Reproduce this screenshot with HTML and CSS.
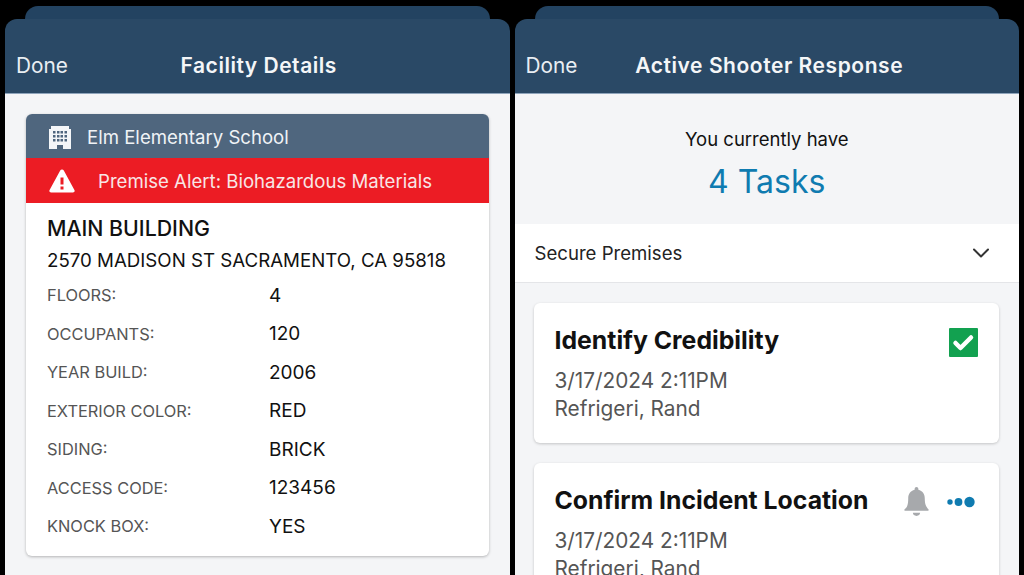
FILE: index.html
```html
<!doctype html>
<html lang="en">

<head>
  <meta charset="utf-8" />
  <meta name="viewport" content="width=device-width,initial-scale=1" />
  <title>Facility Details</title>
  <link rel="stylesheet" href="styles.css">
</head>

<body>
  <div class="screens">
    <div class="phone">
      <div class="sheet-back"></div>
      <div class="nav">
        <div class="done">Done</div>
        <div class="nav-title">Facility Details</div>
      </div>
      <div class="content facility">
        <div class="facility-card">
          <div class="school">
            <svg class="school-icon" viewBox="0 0 24 24" width="24" height="24">
              <path fill="#f4f6f8" fill-rule="evenodd" d="M3 1h18v3h2v20h-8v-4H9v4H1V4h2zM5 6v2.500h2.500V6zM9 6v2.500h2.500V6zM12.500 6v2.500H15V6zM16.500 6v2.500H19V6zM5 10v2.500h2.500V10zM9 10v2.500h2.500V10zM12.500 10v2.500H15V10zM16.500 10v2.500H19V10zM5 14v2.500h2.500V14zM9 14v2.500h2.500V14zM12.500 14v2.500H15V14zM16.500 14v2.500H19V14z" />
            </svg>
            <span>Elm Elementary School</span>
          </div>
          <div class="alert">
            <svg class="alert-icon" viewBox="0 0 26 24" width="26" height="24">
              <path fill="#fff" fill-rule="evenodd" d="M13 0.500c.8 0 1.400.4 1.800 1.100l10.600 19.300c.7 1.300-.1 2.600-1.500 2.600H2.100c-1.400 0-2.200-1.300-1.500-2.600L11.200 1.600c.4-.7 1-1.100 1.800-1.100zM11.500 8.500v7h3v-7zM11.500 17.500v3h3v-3z" />
            </svg>
            <span>Premise Alert: Biohazardous Materials</span>
          </div>
          <div class="facility-body">
            <div class="building">MAIN BUILDING</div>
            <div class="address">2570 MADISON ST SACRAMENTO, CA 95818</div>
            <div class="facts">
              <div class="fact"><span class="fact-label">FLOORS:</span><span class="fact-value">4</span></div>
              <div class="fact"><span class="fact-label">OCCUPANTS:</span><span class="fact-value">120</span></div>
              <div class="fact"><span class="fact-label">YEAR BUILD:</span><span class="fact-value">2006</span></div>
              <div class="fact"><span class="fact-label">EXTERIOR COLOR:</span><span class="fact-value">RED</span></div>
              <div class="fact"><span class="fact-label">SIDING:</span><span class="fact-value">BRICK</span></div>
              <div class="fact"><span class="fact-label">ACCESS CODE:</span><span class="fact-value">123456</span></div>
              <div class="fact"><span class="fact-label">KNOCK BOX:</span><span class="fact-value">YES</span></div>
            </div>
          </div>
        </div>
      </div>
    </div>

    <div class="phone">
      <div class="sheet-back"></div>
      <div class="nav">
        <div class="done">Done</div>
        <div class="nav-title shifted">Active Shooter Response</div>
      </div>
      <div class="content">
        <div class="summary">
          <div class="summary-top">You currently have</div>
          <div class="summary-count">4 Tasks</div>
        </div>
        <div class="section-row">
          <span>Secure Premises</span>
          <svg viewBox="0 0 18 12" width="18" height="12">
            <path d="M2 2.500l7 7 7-7" fill="none" stroke="#333" stroke-width="2" stroke-linecap="round" stroke-linejoin="round" />
          </svg>
        </div>
        <div class="tasks">
          <div class="task">
            <div class="task-head">
              <div class="task-title">Identify Credibility</div>
              <svg class="check" viewBox="0 0 29 29" width="29" height="29">
                <rect width="29" height="29" rx="1" fill="#12a150" />
                <path d="M6.500 15l5 5 10.500-10.500" fill="none" stroke="#fff" stroke-width="4.500" stroke-linecap="round" stroke-linejoin="round" />
              </svg>
            </div>
            <div class="task-line">3/17/2024 2:11PM</div>
            <div class="task-line">Refrigeri, Rand</div>
          </div>
          <div class="task">
            <div class="task-head">
              <div class="task-title">Confirm Incident Location</div>
              <div class="task-icons">
                <svg viewBox="0 0 24 29" width="25" height="30">
                  <path fill="#a7a9ac" d="M12 0c1 0 1.800.8 1.800 1.800v.9c4 .9 6.200 4.200 6.200 8.300 0 5 1 7.500 3.500 10.500.5.700.1 1.500-.8 1.500H1.300c-.9 0-1.300-.8-.8-1.500C3 19.500 4 17 4 11c0-4.100 2.200-7.400 6.200-8.300v-.9C10.200.8 11 0 12 0z" />
                  <path fill="#a7a9ac" d="M8.500 25h7c0 1.500-1.500 3-3.500 3s-3.500-1.500-3.500-3z" />
                </svg>
                <svg viewBox="0 0 28 12" width="28" height="12">
                  <circle cx="3" cy="6" r="2.700" fill="#0f7bb0" />
                  <circle cx="11.500" cy="6" r="3.900" fill="#0f7bb0" />
                  <circle cx="22.500" cy="6" r="5.200" fill="#0f7bb0" />
                </svg>
              </div>
            </div>
            <div class="task-line">3/17/2024 2:11PM</div>
            <div class="task-line">Refrigeri, Rand</div>
          </div>
        </div>
      </div>
    </div>
  </div>
</body>

</html>
```

FILE: styles.css
```css
html,
body {
  height: 100%;
  margin: 0;
  padding: 0;
  background: #000;
  overflow: hidden;
}

* {
  font-family: Inter, "Liberation Sans", sans-serif;
  box-sizing: border-box;
}

.screens {
  display: flex;
  gap: 5px;
  height: 575px;
  padding: 0 5px;
}

.phone {
  flex: 1;
  height: 575px;
  padding-top: 6px;
  overflow: hidden;
  display: flex;
  flex-direction: column;
}

.sheet-back {
  flex: none;
  height: 13px;
  margin: 0 20px;
  border-radius: 14px 14px 0 0;
  background: #234361;
}

.nav {
  flex: none;
  height: 75px;
  display: flex;
  align-items: center;
  padding: 18px 11px 0;
  border-radius: 12px 12px 0 0;
  background: #2a4966;
  border-bottom: 1px solid #8ea4bb;
  color: #fff;
  position: relative;
}

.done {
  font-size: 20.800px;
  color: #e9eef3;
}

.nav-title {
  flex: 1;
  text-align: center;
  margin-right: 49px;
  font-size: 21px;
  font-weight: 600;
  letter-spacing: 0.520px;
  color: #f4f6f8;
}

.nav-title.shifted {
  margin-right: 47px;
  letter-spacing: 0.550px;
}

.content {
  flex: 1;
  background: #f4f5f7;
}

.facility {
  padding: 20px 21px 0;
}

.facility-card {
  border-radius: 6px;
  background: #fff;
  box-shadow: 0 1px 3px #0004;
  height: 442px;
}

.school {
  display: flex;
  align-items: center;
  height: 44px;
  padding: 1px 0 0 22px;
  border-radius: 6px 6px 0 0;
  background: #4f667e;
  color: #f0f3f6;
  font-size: 18.600px;
}

.school-icon {
  margin-right: 15px;
}

.alert {
  display: flex;
  align-items: center;
  height: 45px;
  padding-left: 23px;
  background: #ec1c24;
  color: #f8e6e6;
  font-size: 18.600px;
}

.alert-icon {
  margin-right: 23px;
}

.facility-body {
  padding: 12px 21px 0;
}

.building {
  font-size: 21.300px;
  font-weight: 500;
  line-height: 26px;
  color: #111;
}

.address {
  font-size: 18.700px;
  line-height: 26px;
  margin-top: 7px;
  color: #111;
}

.facts {
  margin-top: 2px;
}

.fact {
  display: flex;
  align-items: center;
  height: 38.500px;
}

.fact-label {
  width: 222px;
  font-size: 16.400px;
  color: #555;
}

.fact-value {
  font-size: 19px;
  color: #111;
}

.summary {
  height: 130px;
  padding-top: 33px;
  text-align: center;
}

.summary-top {
  font-size: 18.500px;
  line-height: 24px;
  color: #111;
}

.summary-count {
  margin-top: 10px;
  font-size: 32px;
  line-height: 42px;
  color: #0f7bb0;
}

.section-row {
  display: flex;
  align-items: center;
  justify-content: space-between;
  height: 59px;
  padding: 0 29px 0 20px;
  background: #fff;
  border-bottom: 1px solid #e4e5e8;
  font-size: 18.600px;
  color: #222;
}

.tasks {
  padding: 20px 20px 0 19px;
}

.task {
  height: 140px;
  margin-bottom: 20px;
  padding: 20px 21px 0;
  border-radius: 6px;
  background: #fff;
  box-shadow: 0 1px 3px #0003;
}

.task-head {
  display: flex;
  align-items: flex-start;
  justify-content: space-between;
  height: 44px;
}

.task-title {
  font-size: 24.800px;
  font-weight: 700;
  line-height: 34px;
  color: #111;
}

.check {
  margin-top: 5px;
}

.task-icons {
  display: flex;
  align-items: center;
  gap: 18px;
  margin-top: 4px;
  margin-right: 3px;
}

.task-line {
  font-size: 20.800px;
  line-height: 28px;
  color: #555;
}
```
